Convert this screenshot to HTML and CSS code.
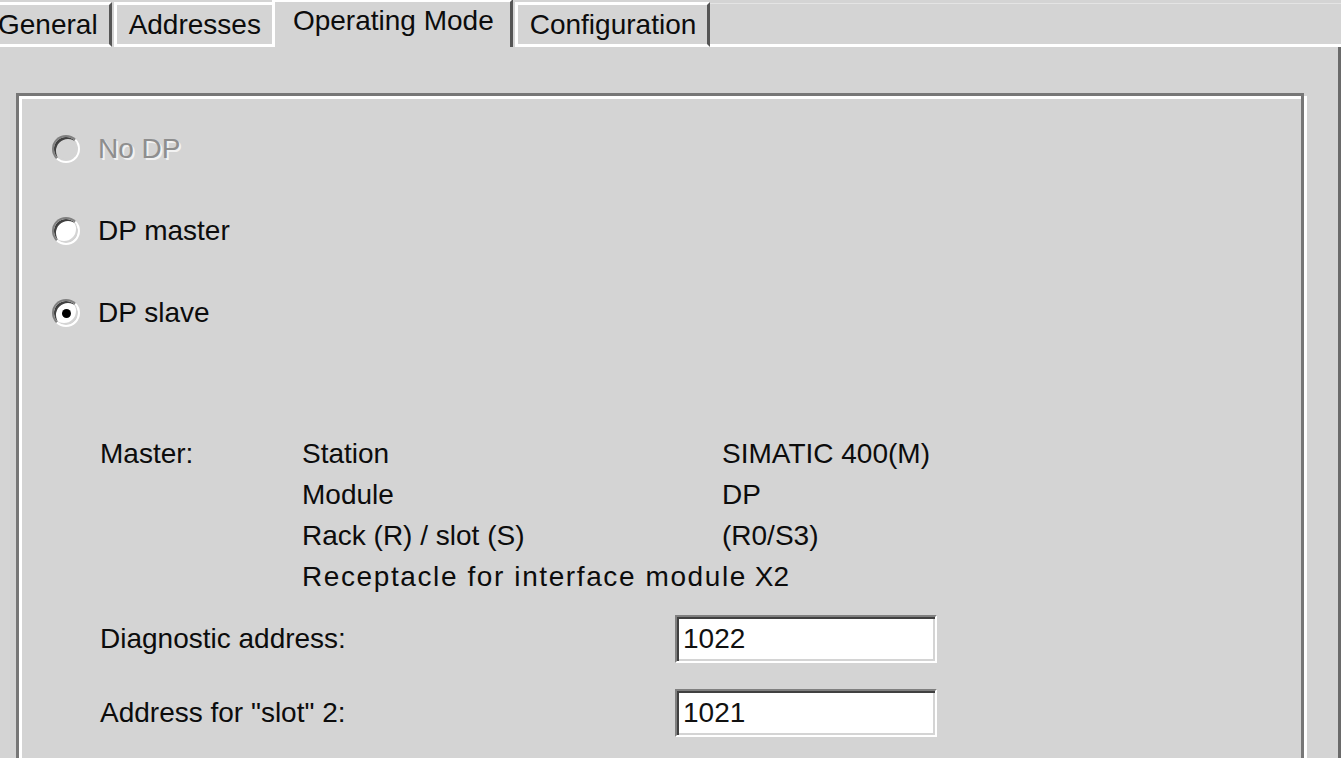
FILE: index.html
```html
<!DOCTYPE html>
<html>
<head>
    <title>Properties - DP</title>
    <link rel="stylesheet" href="styles.css">
</head>
<body>
    <!-- Tab row -->
    <div class="tabstrip">
        <div class="tab">General</div>
        <div class="tab">Addresses</div>
        <div class="tab active">Operating Mode</div>
        <div class="tab">Configuration</div>
        <div class="tab-fill"></div>
    </div>

    <!-- Tab page -->
    <div class="page">
        <div class="group">
            <label class="option disabled"><span class="radio"></span>No DP</label>
            <label class="option"><span class="radio"></span>DP master</label>
            <label class="option"><span class="radio checked"></span>DP slave</label>

            <div class="master">
                <div>Master:</div>
                <div>Station</div>
                <div>SIMATIC 400(M)</div>
                <div></div>
                <div>Module</div>
                <div>DP</div>
                <div></div>
                <div>Rack (R) / slot (S)</div>
                <div>(R0/S3)</div>
                <div></div>
                <div class="span2"><span class="stretched">Receptacle for interface module</span> X2</div>
            </div>

            <div class="field">
                <span class="field-label">Diagnostic address:</span>
                <input type="text" value="1022">
            </div>
            <div class="field second">
                <span class="field-label">Address for "slot" 2:</span>
                <input type="text" value="1021">
            </div>
        </div>
    </div>
</body>
</html>
```

FILE: styles.css
```css
/* Global CSS */
* {
    box-sizing: border-box;
}

body {
    margin: 0;
    height: 758px;
    overflow: hidden;
    background-color: #d4d4d4;
    font-family: "Liberation Sans", Arial, sans-serif;
    font-size: 28px;
    color: #0c0c0c;
}

/* Tabs CSS */
.tabstrip {
    display: flex;
    align-items: flex-end;
    height: 47px;
    margin-left: -17px;
}

.tab {
    height: 45px;
    padding: 0 11px 0 12px;
    background-color: #d4d4d4;
    border-top: 3px solid #fff;
    border-left: 3px solid #fff;
    border-right: 3px solid #555;
    border-bottom: 3px solid #fff;
    line-height: 39px;
    white-space: nowrap;
}

.tab + .tab {
    margin-left: 2px;
}

.tab.active {
    height: 48px;
    margin-left: -3px;
    padding: 0 16px 0 18px;
    border-bottom: none;
    line-height: 38px;
}

.tab-fill {
    flex: 1;
    height: 44px;
    border-top: 1px solid #e4e4e4;
    border-bottom: 3px solid #fff;
}

/* Page CSS */
.page {
    height: 711px;
    overflow: hidden;
    margin-left: -10px;
    padding: 46px 34px 0 23px;
    border-left: 3px solid #fff;
    border-right: 3px solid #6a6a6a;
}

.group {
    height: 700px;
    padding: 33px 0 0 33px;
    border: 3px solid #777;
    box-shadow: inset 3px 3px 0 #fff, 3px 3px 0 #fff;
}

/* Radio buttons */
.option {
    display: flex;
    align-items: center;
    height: 40px;
}

.option + .option {
    margin-top: 42px;
}

.option.disabled {
    color: #8e8e8e;
    text-shadow: 2px 2px 0 #f2f2f2;
}

.radio {
    position: relative;
    flex: none;
    width: 28px;
    height: 28px;
    margin-right: 18px;
    border-radius: 50%;
    border: 2px solid;
    border-color: #808080 #fff #fff #808080;
    background-color: #fff;
    box-shadow: inset 2px 2px 0 #404040, inset -2px -2px 0 #d4d4d4;
}

.option.disabled .radio {
    background-color: #d4d4d4;
}

.radio.checked:after {
    content: '';
    position: absolute;
    top: 50%;
    left: 50%;
    width: 9px;
    height: 9px;
    margin: -4.5px 0 0 -4.5px;
    border-radius: 50%;
    background: #000;
}

/* Master info */
.master {
    display: grid;
    grid-template-columns: 202px 420px auto;
    margin: 100px 0 0 48px;
    line-height: 41px;
    white-space: nowrap;
}

.span2 {
    grid-column: 2 / span 2;
}

.stretched {
    letter-spacing: 1.6px;
}

/* Address fields */
.field {
    display: flex;
    align-items: center;
    height: 48px;
    margin: 18px 0 0 48px;
}

.field.second {
    margin-top: 26px;
}

.field-label {
    width: 575px;
}

.field input {
    width: 262px;
    height: 48px;
    padding: 0 0 0 6px;
    font: inherit;
    color: #111;
    background-color: #fff;
    border: 2px solid;
    border-color: #808080 #fff #fff #808080;
    box-shadow: inset 2px 2px 0 #404040, inset -2px -2px 0 #d4d4d4;
    outline: none;
}
```
